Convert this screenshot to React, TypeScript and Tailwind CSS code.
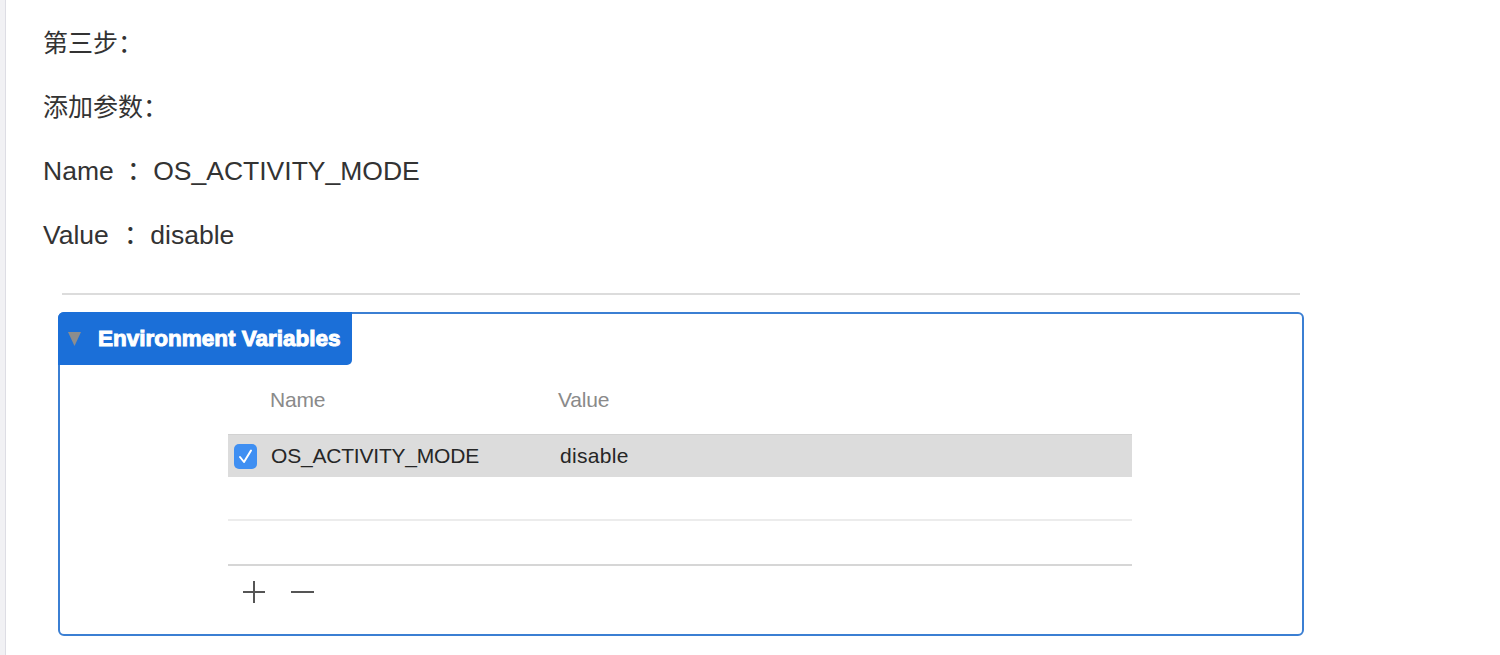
const textFont = { fontFamily: '"Liberation Sans", "Noto Sans CJK SC", sans-serif' };

function Check() {
  return (
    <span className="flex h-[25px] w-[23px] flex-none items-center justify-center rounded-[5px] bg-[#3f8ff2]">
      <svg width="17" height="17" viewBox="0 0 17 17">
        <path d="M3 9 L7 14 L14 2.5" fill="none" stroke="white" strokeWidth="2" strokeLinecap="round" strokeLinejoin="round" />
      </svg>
    </span>
  );
}

export default function App() {
  return (
    <div className="flex min-h-[655px] w-[1500px] bg-white" style={textFont}>
      {/* left gutter of the article */}
      <div className="w-[6px] flex-none border-r border-[#dddde4] bg-[#f1f1f4]" />

      <main className="flex-1">
        <section className="flex flex-col gap-[24px] pl-[37px] pt-[23px] text-[26.5px] leading-[40px] text-[#333]">
          <p><span className="text-[25px]">第三步：</span></p>
          <p><span className="text-[25px]">添加参数：</span></p>
          <p>Name<span className="ml-[13px]">：</span>OS_ACTIVITY_MODE</p>
          <p>Value<span className="ml-[15px]">：</span>disable</p>
        </section>

        <section className="ml-[52px] w-[1246px]">
          <div className="mx-[4px] mt-[38px] h-[2px] bg-[#dcdcdc]" />

          <div className="mt-[17px] flex h-[324px] flex-col rounded-[6px] border-2 border-[#3b7fd3]">
            {/* disclosure tab */}
            <div className="-ml-[2px] -mt-[2px] flex h-[53px] w-[294px] items-center gap-[17px] rounded-tl-[6px] rounded-br-[5px] bg-[#1b6fd8] pl-[10px]">
              <svg width="13" height="14" viewBox="0 0 13 14">
                <polygon points="0,0 13,0 6.5,14" fill="#8d8d8d" />
              </svg>
              <span className="text-[22.5px] font-bold text-white [-webkit-text-stroke:1px_white]">
                Environment Variables
              </span>
            </div>

            {/* table */}
            <div className="ml-[168px] mt-[13px] w-[904px]">
              <div className="flex h-[44px] items-center text-[21px] tracking-[-0.2px] text-[#8a8a8a]">
                <span className="w-[330px] pl-[42px]">Name</span>
                <span>Value</span>
              </div>

              <div className="mt-[12px] flex h-[43px] items-center border-t border-[#d2d2d2] bg-[#dcdcdc] text-[21px] tracking-[-0.2px] text-[#262626]">
                <div className="flex w-[332px] items-center gap-[14px] pl-[6px]">
                  <Check />
                  <span>OS_ACTIVITY_MODE</span>
                </div>
                <span className="tracking-[0.3px]">disable</span>
              </div>

              <div className="h-[42px]" />
              <div className="h-[2px] bg-[#ececec]" />
              <div className="h-[43px]" />
              <div className="h-[2px] bg-[#d6d6d6]" />

              <div className="flex h-[52px] items-center gap-[25px] pl-[14px]">
                <svg width="24" height="24" viewBox="0 0 24 24">
                  <path d="M12 1 V23 M1 12 H23" stroke="#555" strokeWidth="2" />
                </svg>
                <svg width="23" height="24" viewBox="0 0 23 24">
                  <path d="M0 12 H23" stroke="#555" strokeWidth="2" />
                </svg>
              </div>
            </div>
          </div>
        </section>
      </main>
    </div>
  );
}
